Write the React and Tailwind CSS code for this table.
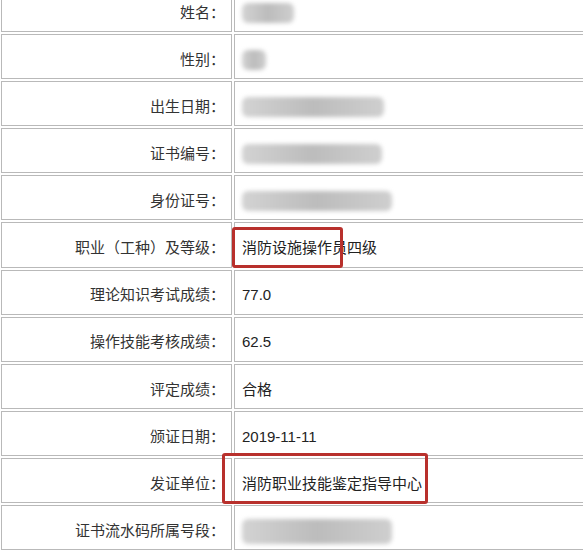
import React from 'react';

const rows = [
  { label: '姓名：', blur: 'w-[52px]' },
  { label: '性别：', blur: 'w-[24px]' },
  { label: '出生日期：', blur: 'w-[142px]' },
  { label: '证书编号：', blur: 'w-[140px]' },
  { label: '身份证号：', blur: 'w-[150px]' },
  { label: '职业（工种）及等级：', value: '消防设施操作员四级' },
  { label: '理论知识考试成绩：', value: '77.0' },
  { label: '操作技能考核成绩：', value: '62.5' },
  { label: '评定成绩：', value: '合格' },
  { label: '颁证日期：', value: '2019-11-11' },
  { label: '发证单位：', value: '消防职业技能鉴定指导中心' },
  { label: '证书流水码所属号段：', blur: 'w-[150px] h-[25px]' },
];

function Blur({ w }) {
  return (
    <span className={`inline-block h-[20px] ${w} rounded-[6px] bg-gradient-to-r from-[#d3d3d3] via-[#bcbcbc] to-[#cfcfcf] blur-[2px]`} />
  );
}

function Row({ label, value, blur }) {
  return (
    <div className="grid grid-cols-[231px_1fr] gap-[2px]">
      <div className="h-[45.1px] border border-[#b9b9b9] flex items-center justify-end pr-[6px] pt-[7px] text-[#333]">
        {label}
      </div>
      <div className="h-[45.1px] border border-r-0 border-[#b9b9b9] flex items-center pl-[7px] pt-[7px] text-[#222]">
        {blur ? <Blur w={blur} /> : value}
      </div>
    </div>
  );
}

export default function App() {
  return (
    <div
      className="relative h-[550px] w-[583px] overflow-hidden bg-white text-[15px]"
      style={{ fontFamily: '"Liberation Sans", "Noto Sans CJK SC", sans-serif' }}
    >
      <div className="-mt-[13px] ml-[1px] flex flex-col gap-[2px]">
        {rows.map((r) => (
          <Row key={r.label} {...r} />
        ))}
      </div>

      {/* red highlight boxes */}
      <div className="absolute left-[232px] top-[227px] w-[111px] h-[41px] border-[3px] border-[#b8302c] rounded-[3px]" />
      <div className="absolute left-[222px] top-[453px] w-[206px] h-[51px] border-[3px] border-[#b8302c] rounded-[3px]" />
    </div>
  );
}
